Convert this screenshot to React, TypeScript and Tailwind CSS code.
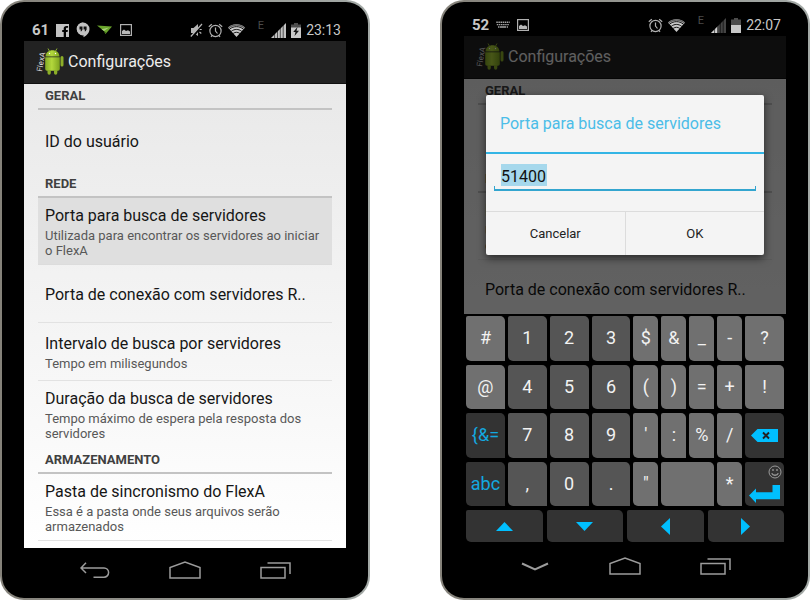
import type { ReactNode } from "react";

/* ---------- status bar icons ---------- */

const FacebookIcon = () => (
  <svg width="13" height="13" viewBox="0 0 13 13" aria-hidden="true">
    <path fill="#c2c2c2" d="M0 0h13v13H10V8h1.600l.3-2H10V4.800c0-.7.3-1.100 1.100-1.100h1V2h-1.600C8.700 2 7.700 3 7.700 4.600V6H6.200v2h1.500v5H0z" />
  </svg>
);

const HangoutsIcon = () => (
  <svg width="14" height="16" viewBox="0 0 14 16" aria-hidden="true">
    <path fill="#c2c2c2" d="M7 .5a6.500 6.500 0 0 1 6.500 6.500c0 3.500-2.500 6.500-6 8.300v-2A6.400 6.400 0 0 1 7 .5z" />
    <path fill="#c2c2c2" d="M7.200 .5A6.500 6.500 0 0 0 7.200 13.500z" />
    <path fill="#111" d="M3.500 4.500h3v3L5.500 9.200h-1L5 7.600H3.500zM7.600 4.500h3v3L9.600 9.200h-1l.5-1.600H7.600z" />
  </svg>
);

const PlaneIcon = () => (
  <svg width="16" height="10" viewBox="0 0 16 10" aria-hidden="true">
    <path fill="#6aa52c" d="M0 .5l15 1L8.500 9l-1.500-3z" />
    <path fill="#a9cf79" d="M4.500 4.200L12 2.500 7 6z" />
    <path fill="#3f7015" d="M7 6l1.500 3 .8-1.500z" />
  </svg>
);

const PictureIcon = () => (
  <svg width="12" height="12" viewBox="0 0 12 12" aria-hidden="true">
    <rect x=".6" y=".6" width="10.800" height="10.800" fill="none" stroke="#b0b0b0" strokeWidth="1.200" />
    <path fill="#b8b8b8" d="M2 10V7l2-1.500 2 1.500 2-.8L10 7.500V10z" />
  </svg>
);

const KeyboardIcon = () => (
  <svg width="14" height="8" viewBox="0 0 14 8" aria-hidden="true">
    <path stroke="#a5a5a5" strokeWidth="1.400" strokeDasharray="1.500 .6" d="M.3 1.200h13.400M.8 3.600h12.400" />
    <path stroke="#a5a5a5" strokeWidth="1.400" d="M2 6h1.500M4 6h6M10.700 6H12" />
  </svg>
);

const MuteIcon = () => (
  <svg width="13" height="15" viewBox="0 0 13 15" aria-hidden="true">
    <path fill="#b5b5b5" d="M1 5h2.500L8 1v12L3.500 10H1z" />
    <path stroke="#000" strokeWidth="2.200" d="M2 14.500L13 1.500" />
    <path stroke="#b5b5b5" strokeWidth="1.200" d="M.8 13.500L12 1M9.700 6.500h2M9.500 9l1.800 1.500" />
  </svg>
);

const AlarmIcon = () => (
  <svg width="15" height="15" viewBox="0 0 15 15" aria-hidden="true" fill="none" stroke="#b0b0b0">
    <circle cx="7.500" cy="8" r="5.600" strokeWidth="1.200" />
    <path strokeWidth="1.200" d="M7.500 4.500V8l2 2.500M.8 3.800L3.800 1.200M14.200 3.800L11.200 1.200M3 13.800l1-1.300M12 13.800l-1-1.300" />
  </svg>
);

const WifiIcon = () => (
  <svg width="17" height="13" viewBox="0 0 17 13" aria-hidden="true">
    <path fill="#c8c8c8" d="M0 3.500C5 -.7 12 -.7 17 3.500L8.500 13z" />
    <path fill="none" stroke="#000" strokeWidth=".9" d="M1.500 5.200c4.200-3.400 9.800-3.400 14 0M3.300 7.300c3.200-2.500 7.200-2.500 10.400 0M5.200 9.400c2-1.500 4.600-1.500 6.600 0" />
    <path fill="#666" d="M0 3.500C5-.7 12-.7 17 3.500l-.9 1C11 .8 6 .8.900 4.500z" />
  </svg>
);

const SignalIcon = ({ full }: { full: boolean }) => (
  <svg width="15" height="15" viewBox="0 0 15 15" aria-hidden="true">
    <path fill={full ? "#c2c2c2" : "#444"} d="M0 15L15 0v15z" />
    {!full && <path fill="#d0d0d0" d="M0 15l7-7v7z" />}
    <path stroke="#000" strokeWidth=".6" d="M3.600 15V9M6.500 15V6M9.300 15V4M12.200 15V1" />
  </svg>
);

const BatteryIcon = ({ charging }: { charging: boolean }) => (
  <svg width="10" height="15" viewBox="0 0 10 15" aria-hidden="true">
    <path fill="#4c4c4c" d="M3 0h4v1.500h3V7H0V1.500h3z" />
    <path fill="#c8c8c8" d={charging ? "M0 4.500h10V15H0z" : "M0 7h10v8H0z"} />
    {charging && <path fill="#111" d="M6.500 4L2.200 9h2.300L3.500 13 8 7.700H5.500z" />}
  </svg>
);

const AndroidLogo = () => (
  <svg width="28" height="30" viewBox="0 0 28 30" role="img" aria-label="FlexA">
    <defs>
      <linearGradient id="droid" x1="0" x2="1" y1="0" y2="0">
        <stop offset="0" stopColor="#86ab26" />
        <stop offset=".45" stopColor="#b3d83c" />
        <stop offset="1" stopColor="#7ea31f" />
      </linearGradient>
    </defs>
    <text x="0" y="0" transform="translate(6 25) rotate(-80)" fill="#dcdcdc" fontSize="8" fontFamily="Roboto, sans-serif">
      FlexA
    </text>
    <path stroke="#97b932" strokeWidth=".9" d="M12 1.500l1.700 3M21 1.500l-1.700 3" />
    <path fill="url(#droid)" d="M9.500 9.500C9.500 1 23.500 1 23.500 9.500zM9.200 10.300h14.600V22a1.800 1.800 0 0 1-1.800 1.800H11A1.800 1.800 0 0 1 9.200 22z" />
    <path fill="#8cae28" d="M11.500 23h3.300v3a1.600 1.600 0 0 1-3.300 0zM18 23h3.300v3a1.600 1.600 0 0 1-3.300 0zM24.500 10.500a1.500 1.500 0 0 1 3 0V18a1.500 1.500 0 0 1-3 0z" />
    <circle cx="13.500" cy="6.500" r=".7" fill="#fff" />
    <circle cx="19.500" cy="6.500" r=".7" fill="#fff" />
  </svg>
);

/* ---------- phone shell ---------- */

const NavBar = ({ first, firstLabel }: { first: ReactNode; firstLabel: string }) => (
  <nav className="flex h-11 shrink-0 items-center justify-center gap-[42px]">
    <button aria-label={firstLabel} className="flex w-12 justify-center">{first}</button>
    <button aria-label="Início" className="flex w-12 justify-center">
      <svg width="32" height="18" viewBox="0 0 32 18" fill="none" stroke="#9c9c9c" strokeWidth="1.500">
        <path d="M1 17V6.500L16 1l15 5.500V17z" />
      </svg>
    </button>
    <button aria-label="Recentes" className="flex w-12 justify-center">
      <svg width="31" height="17" viewBox="0 0 31 17" fill="none" stroke="#9c9c9c" strokeWidth="1.500">
        <path d="M1 5.500h24V16H1zM7.500 1H30v11" />
      </svg>
    </button>
  </nav>
);

const Phone = ({ children }: { children: ReactNode }) => (
  <section className="flex flex-1 rounded-3xl bg-linear-to-r from-[#85827a] to-[#a3a9a6] p-0.5">
    <div className="flex flex-1 flex-col rounded-[22px] bg-black">{children}</div>
  </section>
);

const StatusBar = ({ count, left, right, time }: { count: string; left: ReactNode; right: ReactNode; time: string }) => (
  <div className="flex h-5 items-center justify-between pr-[27px] pl-[30px] text-[#c8c8c8]">
    <div className="flex items-center gap-[7px]">
      <span className="text-[15px] leading-5 font-bold">{count}</span>
      {left}
    </div>
    <div className="flex items-center gap-[5px]">
      {right}
      <span className="text-sm leading-5">{time}</span>
    </div>
  </div>
);

const ActionBar = () => (
  <header className="flex h-[43px] shrink-0 items-center gap-1 border-b border-[#111] bg-[#222] pl-3">
    <AndroidLogo />
    <h1 className="text-base leading-6 text-[#ededed]">Configurações</h1>
  </header>
);

/* ---------- settings list ---------- */

const SectionTitle = ({ children }: { children: string }) => (
  <h2 className="h-[26px] border-b-2 border-[#c3c3c3] pl-[7px] text-[13px] leading-6 font-bold text-[#404040]">
    {children}
  </h2>
);

const Item = ({ title, summary, tone = "plain" }: { title: string; summary?: string; tone?: "plain" | "pressed" | "last" }) => (
  <button
    className={
      "flex min-h-[58px] w-full shrink-0 flex-col justify-center gap-0.5 border-b px-[7px] pt-2 pb-1.5 text-left " +
      (tone === "pressed" ? "border-[#dcdcdc] bg-[#dfdfdf]" : tone === "last" ? "border-transparent" : "border-[#e2e2e2]")
    }
  >
    <span className="text-base leading-5 text-[#161616]">{title}</span>
    {summary && <span className="text-[13px] leading-[15px] text-[#585858]">{summary}</span>}
  </button>
);

/* `short` leaves out everything that the open keyboard would hide */
const SettingsList = ({ short = false }: { short?: boolean }) => (
  <div
    className={
      "min-h-0 flex-1 basis-0 overflow-hidden bg-linear-to-b from-[#e9e9e9] px-3.5 " + (short ? "to-[#f3f3f3]" : "to-white")
    }
  >
    <SectionTitle>GERAL</SectionTitle>
    <div className="py-0.5">
      <Item title="ID do usuário" tone="last" />
    </div>
    <SectionTitle>REDE</SectionTitle>
    <Item
      title="Porta para busca de servidores"
      summary="Utilizada para encontrar os servidores ao iniciar o FlexA"
      tone={short ? "plain" : "pressed"}
    />
    <Item title="Porta de conexão com servidores R.." />
    {!short && (
      <>
        <Item title="Intervalo de busca por servidores" summary="Tempo em milisegundos" />
        <Item
          title="Duração da busca de servidores"
          summary="Tempo máximo de espera pela resposta dos servidores"
          tone="last"
        />
        <SectionTitle>ARMAZENAMENTO</SectionTitle>
        <Item title="Pasta de sincronismo do FlexA" summary="Essa é a pasta onde seus arquivos serão armazenados" />
      </>
    )}
  </div>
);

/* ---------- dialog ---------- */

const PortDialog = () => (
  <div className="absolute inset-0 flex items-center justify-center bg-black/60 px-[22px]">
    <form
      role="dialog"
      aria-labelledby="port-title"
      className="w-full rounded-xs bg-[#f4f4f4] shadow-[0_3px_8px_rgba(0,0,0,0.6)]"
    >
      <label
        id="port-title"
        htmlFor="port"
        className="block h-[59px] border-b-2 border-[#33b5e5] px-3.5 text-base leading-[58px] text-[#4bbde8]"
      >
        Porta para busca de servidores
      </label>
      <div className="px-2 pt-[10px] pb-5">
        <div className="px-[7px]">
          <input
            id="port"
            defaultValue="51400"
            className="block h-[22px] w-[46px] bg-[#a6d8ec] pt-0.5 text-base leading-5 text-[#111] outline-none"
          />
        </div>
        <div className="h-[5px] border-x border-b-2 border-[#33a5cf]" />
      </div>
      <div className="flex h-11 border-t border-[#dcdcdc] text-[13px] text-[#222]">
        <button type="button" className="flex-1 border-r border-[#dcdcdc]">Cancelar</button>
        <button type="button" className="flex-1">OK</button>
      </div>
    </form>
  </div>
);

/* ---------- keyboard ---------- */

const keyShape = "flex items-center justify-center rounded-tl-xs rounded-tr-[5px] rounded-bl-[5px] text-lg leading-6 ";
const digitKey = keyShape + "bg-[#555] text-[#f2f2f2]";
const symbolKey = keyShape + "bg-[#707070] text-[#f2f2f2]";
const modeKey = keyShape + "bg-[#333] text-[#13a9e0]";

const keyRows = [
  ["#", "1", "2", "3", "$", "&", "_", "-", "?"],
  ["@", "4", "5", "6", "(", ")", "=", "+", "!"],
  ["{&=", "7", "8", "9", "'", ":", "%", "/", "delete"],
  ["abc", ",", "0", ".", '"', "space", "*", "enter"],
];

const Key = ({ value }: { value: string }) => {
  if (value === "delete")
    return (
      <button aria-label="Apagar" className={modeKey}>
        <svg width="27" height="13" viewBox="0 0 27 13">
          <path fill="#00bfff" d="M0 6.500L6.500 0H27v13H6.500z" />
          <path stroke="#222" strokeWidth="1.900" d="M12 3.500l6 6M18 3.500l-6 6" />
        </svg>
      </button>
    );
  if (value === "enter")
    return (
      <button aria-label="Enter" className={keyShape + "flex-col gap-1.5 bg-[#333]"}>
        <svg className="mr-0.5 self-end" width="14" height="14" viewBox="0 0 14 14" fill="none" stroke="#9a9a9a">
          <circle cx="7" cy="7" r="6" />
          <path d="M3.700 8.300c1.200 2.600 5.400 2.600 6.600 0M5 4v2M9 4v2" strokeWidth="1.300" />
        </svg>
        <svg width="31" height="18" viewBox="0 0 31 18">
          <path fill="#00bfff" d="M0 10.500L7 3.500v3.700h16.500V0H31v14.200H7v3.800z" />
        </svg>
      </button>
    );
  if (value === "space") return <button aria-label="Espaço" className={symbolKey + " col-span-2"} />;
  if (value === "{&=" || value === "abc") return <button className={modeKey}>{value}</button>;
  return <button className={/[0-9,.]/.test(value) ? digitKey : symbolKey}>{value}</button>;
};

const arrows = [
  { label: "Para cima", path: "M0 13L8.500 4 17 13z" },
  { label: "Para baixo", path: "M0 4h17L8.500 13z" },
  { label: "Para a esquerda", path: "M13 0v17L4 8.500z" },
  { label: "Para a direita", path: "M4 0v17l9-8.500z" },
];

const Keyboard = () => (
  <div className="flex h-[230px] shrink-0 flex-col gap-1 px-6 py-0.5">
    <div className="grid flex-1 grid-cols-[39fr_39fr_39fr_39fr_25fr_25fr_25fr_25fr_39fr] grid-rows-4 gap-x-[3px] gap-y-1">
      {keyRows.flat().map((value) => (
        <Key key={value} value={value} />
      ))}
    </div>
    <div className="grid h-8 grid-cols-4 gap-1">
      {arrows.map((arrow) => (
        <button key={arrow.label} aria-label={arrow.label} className={modeKey}>
          <svg width="17" height="17" viewBox="0 0 17 17">
            <path fill="#00bfff" d={arrow.path} />
          </svg>
        </button>
      ))}
    </div>
  </div>
);

const NetworkType = () => <span className="mr-0.5 ml-2 -mt-2 text-[11px] leading-3 text-[#4a4a4a]">E</span>;

export default function App() {
  return (
    <main className="flex h-screen gap-[70px] bg-white font-[Roboto,'Liberation_Sans',sans-serif]">
      <Phone>
        <div className="pt-[18px] pb-px">
          <StatusBar
            count="61"
            time="23:13"
            left={<><FacebookIcon /><HangoutsIcon /><PlaneIcon /><PictureIcon /></>}
            right={<><MuteIcon /><AlarmIcon /><WifiIcon /><NetworkType /><SignalIcon full /><BatteryIcon charging /></>}
          />
        </div>
        <div className="mx-[22px] flex min-h-0 flex-1 flex-col">
          <ActionBar />
          <SettingsList />
        </div>
        <div className="pb-1.5">
          <NavBar
            firstLabel="Voltar"
            first={
              <svg width="30" height="16" viewBox="0 0 30 16" fill="none" stroke="#9c9c9c" strokeWidth="1.500">
                <path d="M6 .8L1 6l5 5M1 6h23a4.600 4.600 0 0 1 0 9.200H13.500" />
              </svg>
            }
          />
        </div>
      </Phone>

      <Phone>
        <div className="pt-[13px] pb-px">
          <StatusBar
            count="52"
            time="22:07"
            left={<><KeyboardIcon /><PictureIcon /></>}
            right={<><AlarmIcon /><WifiIcon /><NetworkType /><SignalIcon full={false} /><BatteryIcon charging={false} /></>}
          />
        </div>
        <div className="relative mx-[22px] flex min-h-0 flex-1 flex-col">
          <ActionBar />
          <SettingsList short />
          <PortDialog />
        </div>
        <Keyboard />
        <div className="pb-2.5">
          <NavBar
            firstLabel="Ocultar teclado"
            first={
              <svg width="28" height="9" viewBox="0 0 28 9" fill="none" stroke="#9c9c9c" strokeWidth="2">
                <path d="M1 1.500L14 7.500 27 1.500" />
              </svg>
            }
          />
        </div>
      </Phone>
    </main>
  );
}
